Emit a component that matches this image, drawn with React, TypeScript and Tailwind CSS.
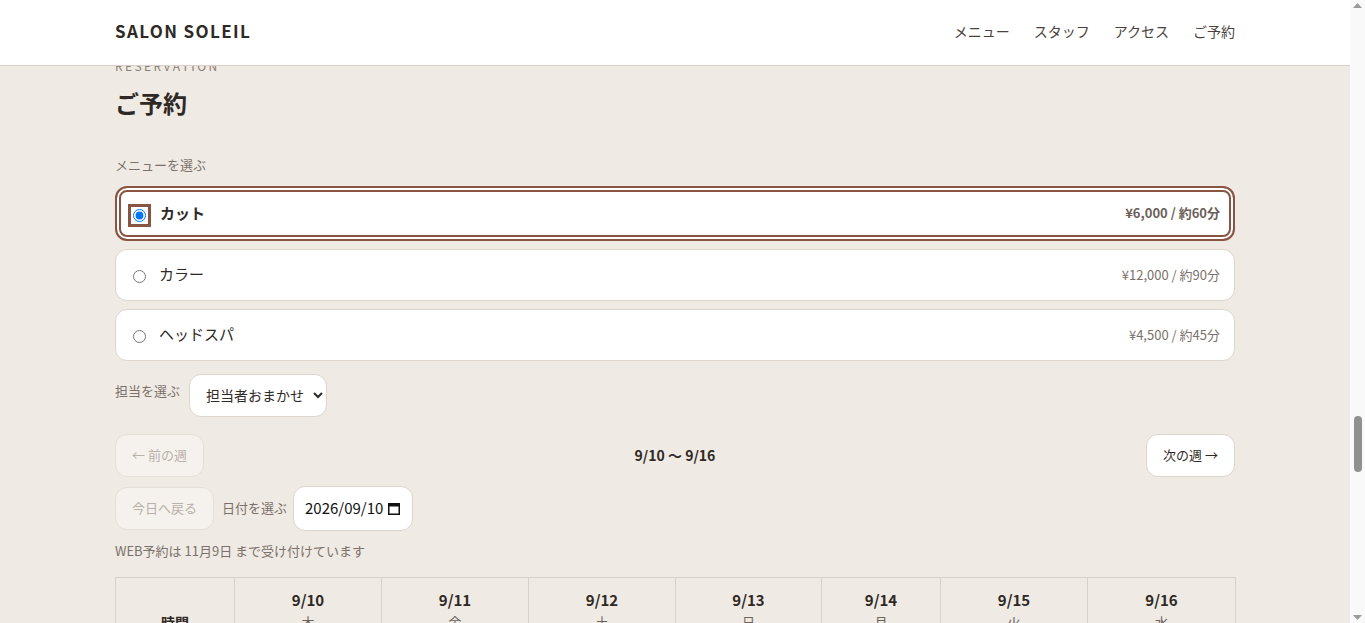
import { useLayoutEffect, useRef, useState } from 'react'

const NAV = ['メニュー', 'スタッフ', 'アクセス', 'ご予約']

const MENUS = [
  { id: 'cut', name: 'カット', price: '¥6,000', time: '約60分' },
  { id: 'color', name: 'カラー', price: '¥12,000', time: '約90分' },
  { id: 'spa', name: 'ヘッドスパ', price: '¥4,500', time: '約45分' },
]

const MENU_LIST = [
  { name: 'カット', desc: 'シャンプー・ブロー込み', price: '¥6,000' },
  { name: 'カラー', desc: 'リタッチは ¥9,000', price: '¥12,000' },
  { name: 'ヘッドスパ', desc: '頭皮ケア・リラクゼーション', price: '¥4,500' },
  { name: 'パーマ', desc: 'カット込み', price: '¥13,000' },
  { name: 'トリートメント', desc: '髪質に合わせて選べます', price: '¥3,000' },
  { name: '縮毛矯正', desc: 'カット込み', price: '¥18,000' },
]

const STAFF = [
  { role: '店長 / トップスタイリスト', name: '佐藤 美咲', note: 'ナチュラルなショートスタイルが得意です。' },
  { role: 'スタイリスト', name: '田中 陽介', note: '透明感のあるカラーをご提案します。' },
  { role: 'アシスタント', name: '山本 彩', note: 'ヘッドスパで癒しの時間をお届けします。' },
]

const NEWS = [
  { date: '2026.09.01', title: '秋の新メニュー「オータムカラー」がスタートしました' },
  { date: '2026.08.20', title: '9月の定休日・営業時間のお知らせ' },
  { date: '2026.08.05', title: 'WEB予約の受付期間を2か月先まで延長しました' },
]

const DAYS = [
  { date: '9/10', wd: '木', closed: false },
  { date: '9/11', wd: '金', closed: false },
  { date: '9/12', wd: '土', closed: false },
  { date: '9/13', wd: '日', closed: false },
  { date: '9/14', wd: '月', closed: true },
  { date: '9/15', wd: '火', closed: false },
  { date: '9/16', wd: '水', closed: false },
]

const TIMES = [
  '10:00', '10:30', '11:00', '11:30', '12:00', '12:30', '13:00', '13:30', '14:00', '14:30',
  '15:00', '15:30', '16:00', '16:30', '17:00', '17:30', '18:00', '18:30',
]

const NOTES = [
  'ご予約の変更・キャンセルは前日までにお電話でご連絡ください。',
  '当日のご予約はお電話にて承ります。',
  '施術内容により、お時間が前後する場合がございます。',
  'お支払いは現金・各種クレジットカード・電子マネーがご利用いただけます。',
]

const BUTTON_H = 15

function SectionTitle({ en, ja }: { en: string; ja: string }) {
  return (
    <div>
      <p className="text-xs tracking-[0.2em] text-[#8a7f78]">{en}</p>
      <h2 className="mt-3 text-2xl font-bold text-[#2f2925]">{ja}</h2>
    </div>
  )
}

function CalendarIcon() {
  return (
    <svg width="12" height="13" viewBox="0 0 12 13" fill="none">
      <rect x="0.75" y="1.75" width="10.5" height="10.5" stroke="#111" strokeWidth="1.5" />
      <rect x="0" y="1" width="12" height="3.5" fill="#111" />
    </svg>
  )
}

function ScrollTrack({ top, size }: { top: number; size: number }) {
  return (
    <div className="flex w-[15px] shrink-0 flex-col bg-[#f9f9f9]">
      <div className="flex h-[15px] justify-center pt-[3px]">
        <svg width="9" height="5" viewBox="0 0 9 5"><path d="M4.5 0L9 5H0z" fill="#9a9a9a" /></svg>
      </div>
      <div className="relative flex-1">
        <div className="absolute left-[4px] right-[3px] rounded-full bg-[#909090]" style={{ top, height: size }} />
      </div>
      <div className="flex h-[15px] items-end justify-center pb-[3px]">
        <svg width="9" height="5" viewBox="0 0 9 5"><path d="M0 0H9L4.5 5z" fill="#9a9a9a" /></svg>
      </div>
    </div>
  )
}

export default function App() {
  const [menu, setMenu] = useState('cut')
  const [bar, setBar] = useState({ top: 0, size: 0 })
  const scroller = useRef<HTMLDivElement>(null)
  const label = useRef<HTMLParagraphElement>(null)

  const updateBar = () => {
    const box = scroller.current
    if (!box) return
    const track = box.clientHeight - BUTTON_H * 2
    const size = Math.max(20, (track * box.clientHeight) / box.scrollHeight)
    const max = box.scrollHeight - box.clientHeight
    const top = max > 0 ? ((track - size) * box.scrollTop) / max : 0
    setBar({ top, size })
  }

  // open the page at the reservation form
  useLayoutEffect(() => {
    const box = scroller.current
    const el = label.current
    if (!box || !el) return
    box.scrollTop = el.getBoundingClientRect().top - box.getBoundingClientRect().top + box.scrollTop - 58
    updateBar()
  }, [])

  return (
    <div className="flex h-screen bg-[#efeae4] font-['Noto_Sans_CJK_JP','Noto_Sans',sans-serif] text-[#2f2925]">
      <div ref={scroller} onScroll={updateBar} className="min-w-0 flex-1 overflow-y-scroll [scrollbar-width:none]">

        {/* Header */}
        <header className="sticky top-0 z-40 bg-white border-b border-[#dcd0c6]">
          <div className="max-w-6xl mx-auto px-4 h-[65px] pb-1 flex items-center justify-between">
            <a href="#" className="text-[17px] font-bold tracking-[0.08em] text-[#2f2925]">SALON SOLEIL</a>
            <nav className="flex items-center gap-6 text-sm text-[#4a413b]">
              {NAV.map(item => (
                <a key={item} href="#">{item}</a>
              ))}
            </nav>
          </div>
        </header>

        {/* Hero */}
        <section className="bg-[#e4d8cc]">
          <div className="max-w-6xl mx-auto px-4 h-[500px] flex flex-col justify-center">
            <p className="text-xs tracking-[0.3em] text-[#8a7f78]">HAIR SALON IN OMOTESANDO</p>
            <h1 className="mt-4 text-5xl font-bold tracking-[0.08em]">SALON SOLEIL</h1>
            <p className="mt-6 text-base text-[#5c524b]">陽だまりのような、やさしい時間を。</p>
            <a href="#reservation" className="mt-10 self-start rounded-full bg-[#8a5442] px-8 py-3 text-sm text-white">
              ご予約はこちら
            </a>
          </div>
        </section>

        {/* Concept */}
        <section className="max-w-6xl mx-auto px-4 py-24">
          <SectionTitle en="CONCEPT" ja="コンセプト" />
          <p className="mt-8 max-w-2xl text-[15px] leading-8 text-[#5c524b]">
            SALON SOLEIL は、表参道の小さなプライベートサロンです。ひとりひとりの髪質やライフスタイルに寄り添い、
            毎日のお手入れが楽になるスタイルをご提案します。光がたっぷり入る店内で、ゆっくりとお過ごしください。
          </p>
        </section>

        {/* News */}
        <section className="max-w-6xl mx-auto px-4 py-24">
          <SectionTitle en="NEWS" ja="お知らせ" />
          <ul className="mt-10 divide-y divide-[#ddd5cc] border-y border-[#ddd5cc]">
            {NEWS.map(n => (
              <li key={n.date} className="flex gap-8 py-5 text-[15px]">
                <span className="text-[#8a7f78]">{n.date}</span>
                <span>{n.title}</span>
              </li>
            ))}
          </ul>
        </section>

        {/* Menu */}
        <section className="max-w-6xl mx-auto px-4 py-24">
          <SectionTitle en="MENU" ja="メニュー" />
          <ul className="mt-10 divide-y divide-[#ddd5cc] border-y border-[#ddd5cc]">
            {MENU_LIST.map(m => (
              <li key={m.name} className="flex items-center justify-between py-6">
                <div>
                  <p className="text-base font-bold">{m.name}</p>
                  <p className="mt-1 text-[13px] text-[#7b716a]">{m.desc}</p>
                </div>
                <p className="text-base font-bold">{m.price}</p>
              </li>
            ))}
          </ul>
        </section>

        {/* Staff */}
        <section className="max-w-6xl mx-auto px-4 py-24">
          <SectionTitle en="STAFF" ja="スタッフ" />
          <div className="mt-10 grid grid-cols-3 gap-8">
            {STAFF.map(s => (
              <div key={s.name} className="rounded-2xl bg-white p-6">
                <div className="h-64 rounded-xl bg-[#e4d8cc]" />
                <p className="mt-5 text-xs text-[#8a7f78]">{s.role}</p>
                <p className="mt-1 text-lg font-bold">{s.name}</p>
                <p className="mt-3 text-[13px] leading-6 text-[#5c524b]">{s.note}</p>
              </div>
            ))}
          </div>
        </section>

        {/* Gallery */}
        <section className="max-w-6xl mx-auto px-4 py-24">
          <SectionTitle en="GALLERY" ja="スタイル" />
          <div className="mt-10 grid grid-cols-3 gap-4">
            {['bg-[#dccbbb]', 'bg-[#e6dbd0]', 'bg-[#d3c1b0]', 'bg-[#e9e0d6]', 'bg-[#d8c7b6]', 'bg-[#e2d5c8]'].map(c => (
              <div key={c} className={`h-72 rounded-xl ${c}`} />
            ))}
          </div>
        </section>

        {/* Access */}
        <section className="max-w-6xl mx-auto px-4 py-24">
          <SectionTitle en="ACCESS" ja="アクセス" />
          <div className="mt-10 grid grid-cols-2 gap-10">
            <dl className="space-y-5 text-[15px]">
              <div>
                <dt className="text-[13px] text-[#7b716a]">住所</dt>
                <dd className="mt-1">東京都渋谷区神宮前4-12-8 ソレイユビル2F</dd>
              </div>
              <div>
                <dt className="text-[13px] text-[#7b716a]">営業時間</dt>
                <dd className="mt-1">10:00〜19:00（最終受付 18:30）</dd>
              </div>
              <div>
                <dt className="text-[13px] text-[#7b716a]">定休日</dt>
                <dd className="mt-1">毎週月曜日</dd>
              </div>
              <div>
                <dt className="text-[13px] text-[#7b716a]">電話</dt>
                <dd className="mt-1">03-1234-5678</dd>
              </div>
            </dl>
            <div className="h-80 rounded-xl bg-[#ddd3c8]" />
          </div>
        </section>

        {/* Reservation */}
        <section id="reservation" className="max-w-6xl mx-auto px-4 pt-16 pb-24">
          <p ref={label} className="text-xs tracking-[0.2em] text-[#8a7f78]">RESERVATION</p>
          <h2 className="mt-[13px] text-2xl font-bold">ご予約</h2>

          <p className="mt-9 text-[13px] leading-5 text-[#7b716a]">メニューを選ぶ</p>
          <div className="mt-[11px] flex flex-col gap-2">
            {MENUS.map(m => {
              const selected = m.id === menu
              return (
                <label
                  key={m.id}
                  className={
                    selected
                      ? 'flex items-center h-[55px] rounded-xl bg-white border-2 border-[#8a5442] shadow-[inset_0_0_0_2px_#fff,inset_0_0_0_4px_#8a5442] pl-4 pr-[13px] cursor-pointer'
                      : 'flex items-center h-[52px] rounded-xl bg-white border border-[#ddd5cc] pl-[17px] pr-3.5 cursor-pointer'
                  }
                >
                  <input
                    type="radio"
                    name="menu"
                    checked={selected}
                    onChange={() => setMenu(m.id)}
                    className={selected ? 'mt-1 outline-3 outline-offset-2 outline-[#8a5442]' : 'mt-1'}
                  />
                  <span className={selected ? 'ml-[14px] text-[15px] font-bold' : 'ml-[13px] text-[15px]'}>{m.name}</span>
                  <span className={selected ? 'ml-auto text-[13px] font-bold text-[#6b5f58]' : 'ml-auto text-[13px] text-[#7b716a]'}>
                    {m.price} / {m.time}
                  </span>
                </label>
              )
            })}
          </div>

          {/* Staff select */}
          <div className="mt-[13px] flex items-start gap-2">
            <span className="pt-[7px] text-[13px] leading-5 text-[#7b716a]">担当を選ぶ</span>
            <select className="ml-px h-[43px] rounded-xl border border-[#ddd5cc] bg-white pl-[12px] pr-[6px] text-sm text-[#2f2925]">
              <option>担当者おまかせ</option>
              <option>佐藤 美咲</option>
              <option>田中 陽介</option>
              <option>山本 彩</option>
            </select>
          </div>

          {/* Week navigation */}
          <div className="mt-[17px] flex items-center justify-between">
            <button disabled className="h-[43px] rounded-xl border border-[#e6dfd8] bg-[#f5f2ee] px-4 text-[13px] text-[#b9b0a9]">
              ← 前の週
            </button>
            <p className="text-sm font-bold">9/10 〜 9/16</p>
            <button className="h-[43px] rounded-xl border border-[#ddd5cc] bg-white px-4 text-[13px] text-[#2f2925]">
              次の週 →
            </button>
          </div>

          <div className="mt-[9px] flex items-center">
            <button disabled className="h-[43px] rounded-xl border border-[#e6dfd8] bg-[#f5f2ee] px-4 text-[13px] text-[#b9b0a9]">
              今日へ戻る
            </button>
            <span className="ml-2 text-[13px] text-[#7b716a]">日付を選ぶ</span>
            <div className="ml-1.5 flex h-[45px] w-[120px] items-center gap-[5px] rounded-xl border border-[#ddd5cc] bg-white pl-[11px] text-[15px] text-[#111]">
              2026/09/10
              <CalendarIcon />
            </div>
          </div>

          <p className="mt-2.5 text-[13px] leading-5 text-[#7b716a]">WEB予約は 11月9日 まで受け付けています</p>

          {/* Time table */}
          <table className="mt-4 w-full table-fixed border-collapse">
            <colgroup>
              <col className="w-[119px]" />
              <col className="w-[147px]" />
              <col className="w-[147px]" />
              <col className="w-[147px]" />
              <col className="w-[146px]" />
              <col className="w-[119px]" />
              <col className="w-[147px]" />
              <col className="w-[148px]" />
            </colgroup>
            <thead>
              <tr>
                <th className="h-[90px] border border-[#d9d1c8] text-sm font-bold">時間</th>
                {DAYS.map(d => (
                  <th key={d.date} className="h-[90px] border border-[#d9d1c8] font-normal">
                    <p className="text-[15px] font-bold leading-[22px]">{d.date}</p>
                    <p className="text-[13px] leading-[22px] text-[#6b625b]">{d.wd}</p>
                    <p className="text-xs leading-[22px] text-[#9a908a]">{d.closed ? '定休日' : '空きあり'}</p>
                  </th>
                ))}
              </tr>
            </thead>
            <tbody>
              {TIMES.map((t, i) => (
                <tr key={t}>
                  <td className="h-[52px] border border-[#d9d1c8] text-center text-sm">{t}</td>
                  {DAYS.map((d, j) => (
                    <td key={d.date} className="h-[52px] border border-[#d9d1c8] bg-white text-center text-sm">
                      {d.closed ? (
                        <span className="text-[#b9b0a9]">—</span>
                      ) : (i + j) % 5 === 0 ? (
                        <span className="text-[#b9b0a9]">×</span>
                      ) : (
                        <button className="rounded-lg px-4 py-1 text-[#8a5442]">○</button>
                      )}
                    </td>
                  ))}
                </tr>
              ))}
            </tbody>
          </table>

          <ul className="mt-12 space-y-2 text-[13px] leading-6 text-[#7b716a]">
            {NOTES.map(n => (
              <li key={n}>・{n}</li>
            ))}
          </ul>
        </section>

        {/* Footer */}
        <footer className="bg-[#2f2925] py-20 text-center">
          <p className="text-[15px] font-bold tracking-[0.1em] text-white">SALON SOLEIL</p>
          <p className="mt-4 text-xs leading-6 text-white/60">東京都渋谷区神宮前4-12-8 ソレイユビル2F</p>
          <p className="text-xs leading-6 text-white/60">TEL 03-1234-5678 / 定休日 毎週月曜日</p>
          <p className="mt-6 text-xs text-white/40">© 2026 SALON SOLEIL</p>
        </footer>
      </div>

      <ScrollTrack top={bar.top} size={bar.size} />
    </div>
  )
}
